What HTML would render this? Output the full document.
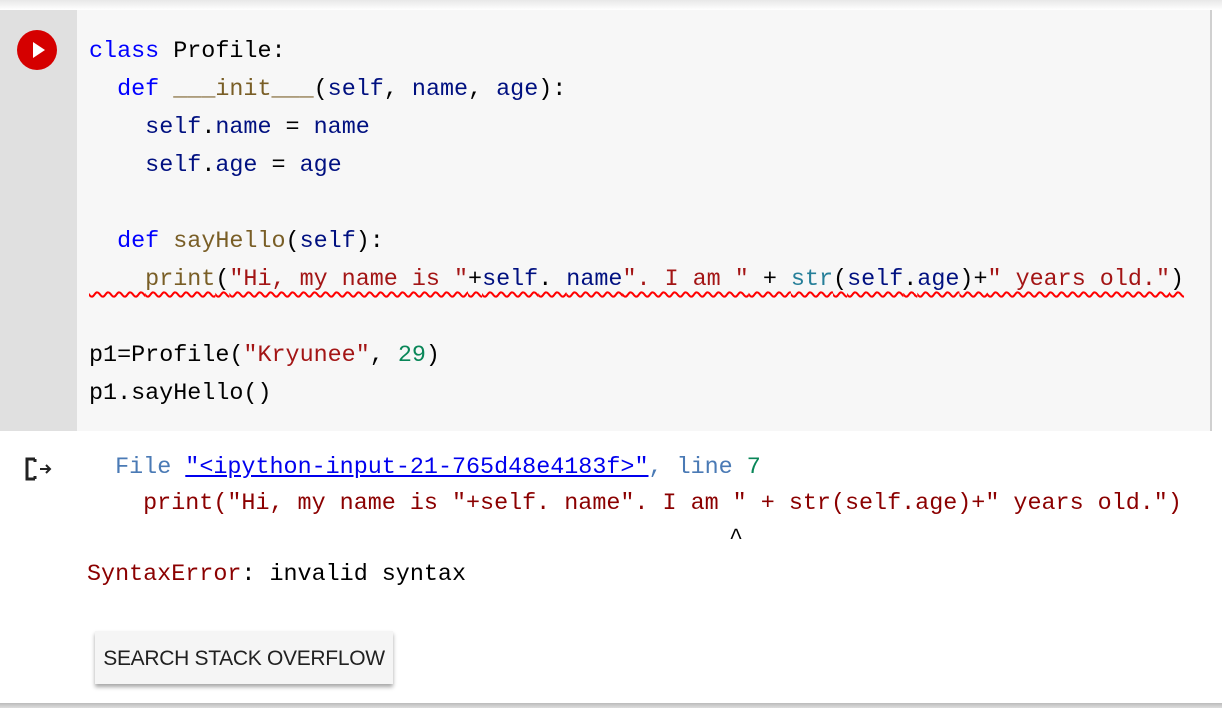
<!DOCTYPE html>
<html><head><meta charset="utf-8"><style>
*{margin:0;padding:0;box-sizing:border-box}
body{width:1222px;height:708px;background:#fff;position:relative;overflow:hidden;font-family:"Liberation Mono","Noto Sans CJK KR",monospace;}
.top{position:absolute;left:0;top:0;width:1222px;height:10px;background:linear-gradient(#e8e8e8,#fff)}
.gut{position:absolute;left:0;top:10px;width:77px;height:421px;background:#e0e0e0}
.cell{position:absolute;left:77px;top:10px;width:1134px;height:421px;background:#f7f7f7}
.vb{position:absolute;left:1210px;top:10px;width:2px;height:421px;background:#d0d0d0}
.run{position:absolute;left:17px;top:30px;width:40px;height:40px;border-radius:50%;background:#d50000}
.run:after{content:"";position:absolute;left:16px;top:12px;border-left:12px solid #fff;border-top:8px solid transparent;border-bottom:8px solid transparent}
.l{position:absolute;left:89px;font-size:23.4px;line-height:30px;white-space:pre;color:#000}
.k{color:#0000ff}.f{color:#795e26}.v{color:#001080}.s{color:#a31515}.n{color:#098658}
.wavy{text-decoration:underline wavy #f00;text-decoration-thickness:1.5px;text-underline-offset:6px}
.o{color:#8b0000}.fl{color:#4a7ab5}a{color:#0000ee;text-decoration:underline}
.btn{position:absolute;left:95px;top:631px;width:298px;height:53px;background:#f5f5f5;box-shadow:0 3px 4px rgba(0,0,0,.35);font-family:"Liberation Sans",sans-serif;font-size:21px;color:#212121;line-height:55px;text-align:center;letter-spacing:-0.3px}
.bot{position:absolute;left:0;top:703px;width:1222px;height:5px;background:linear-gradient(#bbb,#ddd)}
</style></head><body>
<div class="top"></div>
<div class="gut"></div><div class="cell"></div><div class="vb"></div>
<div class="run"></div>
<div class="l" style="top:37px"><span class="k">class</span> Profile:</div>
<div class="l" style="top:75px">  <span class="k">def</span> <span class="f">___init___</span>(<span class="v">self</span>, <span class="v">name</span>, <span class="v">age</span>):</div>
<div class="l" style="top:113px">    <span class="v">self</span>.<span class="v">name</span> = <span class="v">name</span></div>
<div class="l" style="top:151px">    <span class="v">self</span>.<span class="v">age</span> = <span class="v">age</span></div>
<div class="l" style="top:227px">  <span class="k">def</span> <span class="f">sayHello</span>(<span class="v">self</span>):</div>
<div class="l wavy" style="top:265px">    <span class="f">print</span>(<span class="s">"Hi, my name is "</span>+<span class="v">self</span>. <span class="v">name</span><span class="s">". I am "</span> + <span class="k" style="color:#267f99">str</span>(<span class="v">self</span>.<span class="v">age</span>)+<span class="s">" years old."</span>)</div>
<div class="l" style="top:341px"><span class="v" style="color:#000">p1</span>=Profile(<span class="s">"Kryunee"</span>, <span class="n">29</span>)</div>
<div class="l" style="top:379px">p1.sayHello()</div>
<svg style="position:absolute;left:25px;top:456px" width="32" height="26" viewBox="0 0 32 26"><path d="M10 3H2v20h8M10 3v3M10 23v-3" fill="none" stroke="#222" stroke-width="3"/><path d="M15 13h10M21 9l4 4-4 4" fill="none" stroke="#222" stroke-width="2"/></svg>
<div class="l" style="top:453px;left:87px">  <span class="fl">File</span> <a>"&lt;ipython-input-21-765d48e4183f&gt;"</a><span class="fl">, line</span> <span style="color:#098658">7</span></div>
<div class="l o" style="top:489px;left:87px">    print("Hi, my name is "+self. name". I am " + str(self.age)+" years old.")</div>
<div class="l" style="top:524px;left:729px">^</div>
<div class="l" style="top:560px;left:87px"><span class="o">SyntaxError</span>: invalid syntax</div>
<div class="btn">SEARCH STACK OVERFLOW</div>
<div class="bot"></div>
</body></html>
